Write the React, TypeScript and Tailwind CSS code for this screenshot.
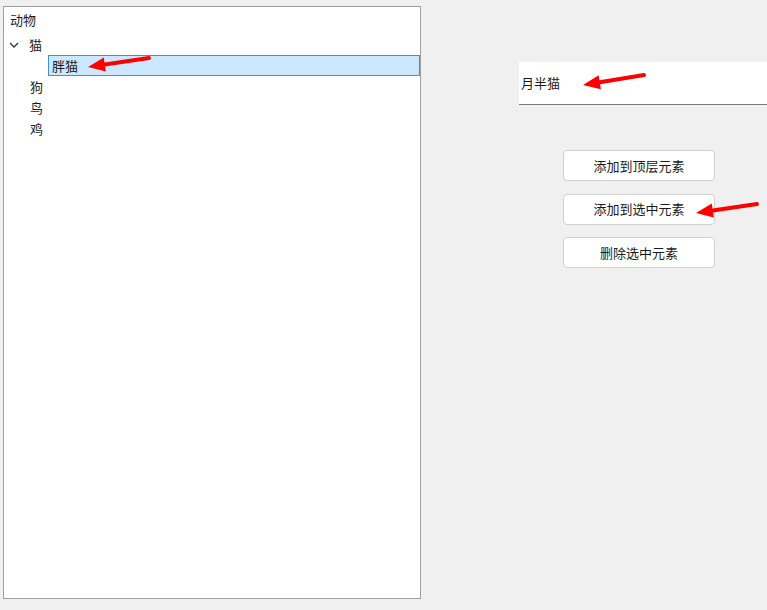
import React from "react";

const FONT = { fontFamily: '"Microsoft YaHei", "Noto Sans CJK SC", "Noto Sans", sans-serif' };

function Arrow({ x1, y1, x2, y2 }: { x1: number; y1: number; x2: number; y2: number }) {
  // red arrow pointing from (x1,y1) toward (x2,y2)
  const dx = x2 - x1;
  const dy = y2 - y1;
  const len = Math.hypot(dx, dy);
  const ux = dx / len;
  const uy = dy / len;
  const head = 17;
  const bx = x2 - ux * head;
  const by = y2 - uy * head;
  const px = -uy * 7;
  const py = ux * 7;
  return (
    <svg className="absolute left-0 top-0 pointer-events-none" width="767" height="610">
      <line x1={x1} y1={y1} x2={bx} y2={by} stroke="#f00" strokeWidth="4" strokeLinecap="round" />
      <polygon points={`${x2},${y2} ${bx + px},${by + py} ${bx - px},${by - py}`} fill="#f00" />
    </svg>
  );
}

function TreeRow({ indent, label, chevron }: { indent: number; label: string; chevron?: boolean }) {
  return (
    <div className="flex items-center h-[21px]" style={{ paddingLeft: indent }}>
      {chevron && (
        <svg width="10" height="10" viewBox="0 0 10 10" className="mr-[10px] -ml-[1px]">
          <path d="M1 3 L5 7 L9 3" fill="none" stroke="#333" strokeWidth="1.3" />
        </svg>
      )}
      <span>{label}</span>
    </div>
  );
}

function Button({ label }: { label: string }) {
  return (
    <button className="w-[152px] h-[31px] bg-white border border-[#d0d0d0] rounded-[4px] text-[13px] text-[#1a1a1a]">
      {label}
    </button>
  );
}

export default function App() {
  return (
    <div className="relative w-[767px] h-[610px] bg-[#f0f0f0] overflow-hidden text-[13px] text-[#1a1a1a]" style={FONT}>
      <div className="flex pt-[6px] pl-[3px]">
        {/* tree */}
        <div className="w-[418px] h-[593px] bg-white border border-[#a0a0a0] pt-[2px]">
          <div className="h-[22px] flex items-center pl-[6px]">动物</div>
          <div className="mt-[3px]">
            <TreeRow indent={6} label="猫" chevron />
          </div>
          <div className="h-[21px] flex items-center pl-[44px]">
            <div className="flex-1 h-[21px] flex items-center bg-[#cce8ff] border border-[#3d92dc] pl-[3px]">胖猫</div>
          </div>
          <TreeRow indent={26} label="狗" />
          <TreeRow indent={26} label="鸟" />
          <TreeRow indent={26} label="鸡" />
        </div>

        {/* right side */}
        <div className="flex-1 flex flex-col pt-[56px] pl-[98px]">
          <div className="h-[43px] bg-white border-b border-[#7a7a7a] flex items-center pl-[2px] text-[13px]">月半猫</div>
          <div className="flex flex-col items-start gap-[12.5px] mt-[45px] pl-[44px]">
            <Button label="添加到顶层元素" />
            <Button label="添加到选中元素" />
            <Button label="删除选中元素" />
          </div>
        </div>
      </div>

      <Arrow x1={149} y1={58} x2={88} y2={67} />
      <Arrow x1={644} y1={75} x2={583} y2={85} />
      <Arrow x1={757} y1={204} x2={696} y2={213} />
    </div>
  );
}
